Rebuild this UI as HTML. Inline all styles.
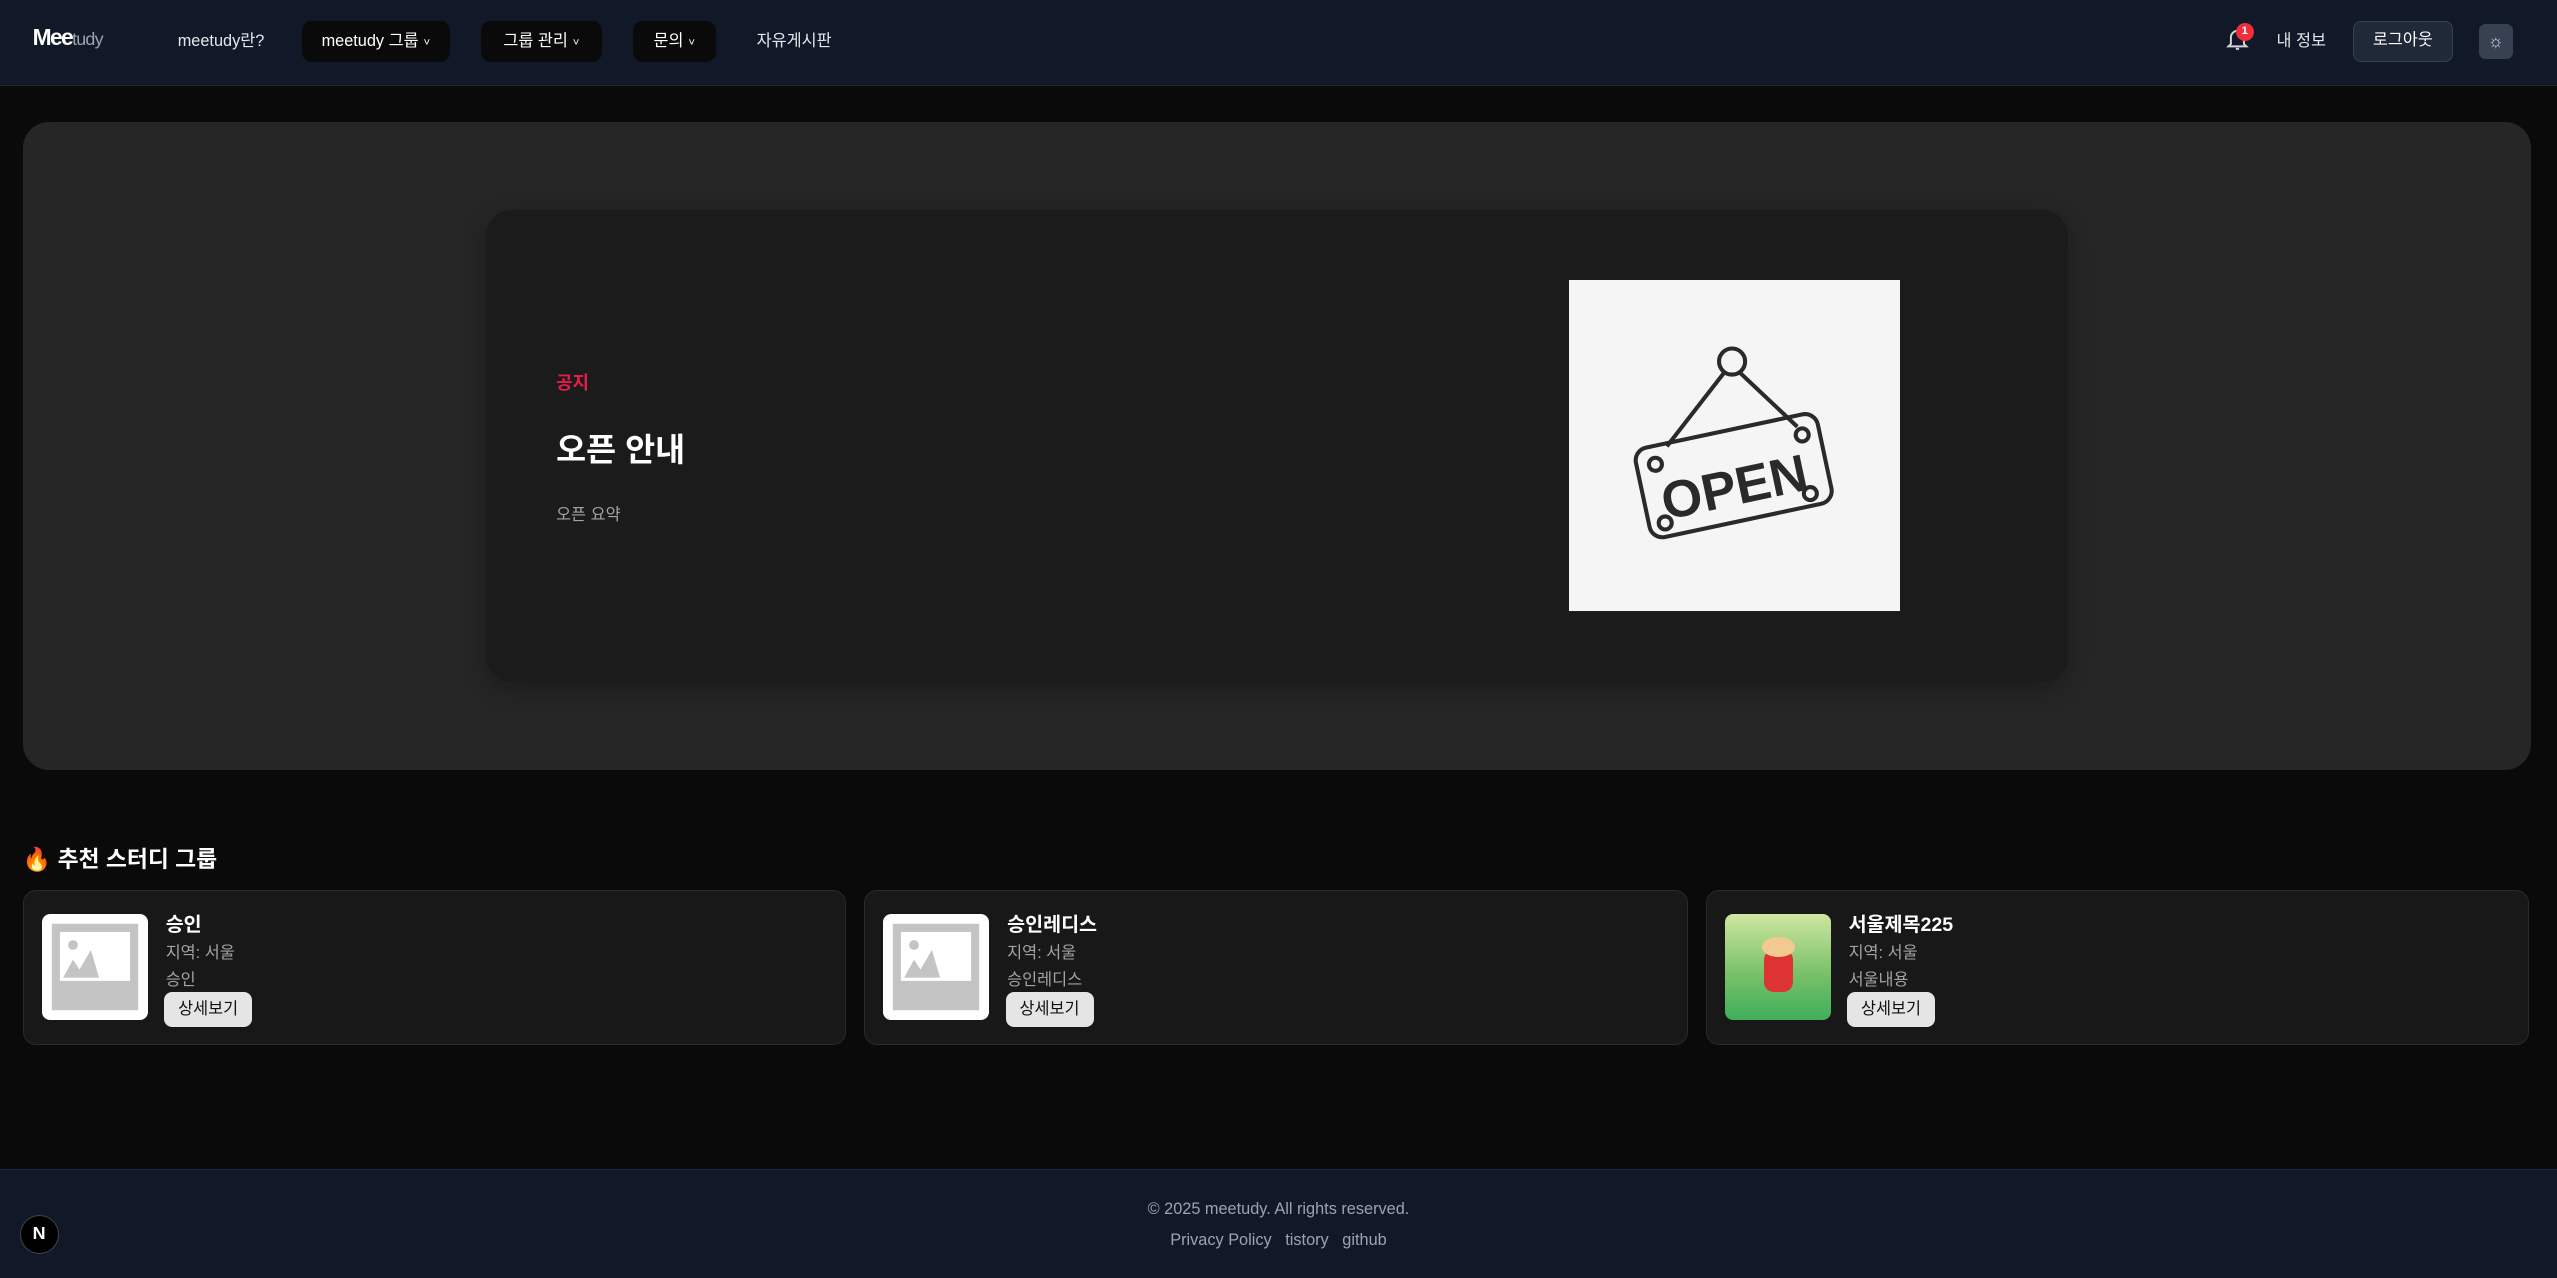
<!DOCTYPE html>
<html><head><meta charset="utf-8"><style>
*{margin:0;padding:0;box-sizing:border-box}
html,body{width:2557px;height:1278px;overflow:hidden;background:#0a0a0a}
#r{zoom:1.6307;width:1568px;height:784px;position:relative;font-family:"Liberation Sans","Noto Sans CJK KR",sans-serif;color:#fff}
.a{position:absolute;white-space:nowrap}
header{position:absolute;left:0;top:0;width:1568px;height:53px;background:#111827;border-bottom:1px solid #1f2937}
.nav{position:absolute;top:13px;height:25px;line-height:25px;font-size:10px;color:#e5e7eb;border-radius:6px;padding:0 10px;white-space:nowrap;text-align:center}
.dd{background:#0a0a0a;color:#fff}
.ch{font-size:7px;margin-left:3px}
.card{position:absolute;top:546px;width:505px;height:95px;background:#181818;border:1px solid #2b2b2b;border-radius:8px}
.thumb{position:absolute;left:11px;top:14px;width:65px;height:65px;background:#fff;border-radius:5px;overflow:hidden}
.ct{position:absolute;left:87px;top:10px;font-size:12px;font-weight:bold}
.c1{position:absolute;left:87px;top:29px;font-size:10px;color:#a3a3a3}
.c2{position:absolute;left:87px;top:46px;font-size:10px;color:#a3a3a3}
.btn{position:absolute;left:86px;top:62px;width:54px;height:21px;background:#e5e5e5;color:#111;border-radius:5px;font-size:10px;text-align:center;line-height:21px}
</style></head><body><div id="r">
<header>
<div class="a" style="left:20px;top:15px;font-size:14px;font-weight:bold;letter-spacing:-1px">Mee<span style="font-weight:normal;font-size:11px;color:#9ca3af;letter-spacing:-0.5px">tudy</span></div>
<div class="nav" style="left:99px">meetudy란?</div>
<div class="nav dd" style="left:185px;width:91px;padding:0">meetudy 그룹<span class="ch">˅</span></div>
<div class="nav dd" style="left:295px;width:74px;padding:0">그룹 관리<span class="ch">˅</span></div>
<div class="nav dd" style="left:388px;width:51px;padding:0">문의<span class="ch">˅</span></div>
<div class="nav" style="left:454px">자유게시판</div>
<svg class="a" style="left:1365px;top:16px" width="14" height="16" viewBox="0 0 14 16" fill="none" stroke="#d1d5db" stroke-width="1.2"><path d="M3 11V7a4 4 0 018 0v4l1.5 1.5h-11z"/><path d="M6 14h2"/></svg>
<div class="a" style="left:1371px;top:14px;width:11px;height:11px;border-radius:50%;background:#ef2f3a;font-size:7px;font-weight:bold;text-align:center;line-height:11px">1</div>
<div class="nav" style="left:1386px">내 정보</div>
<div class="a" style="left:1443px;top:13px;width:61px;height:25px;border:1px solid #374151;background:#1f2937;border-radius:5px;font-size:10px;text-align:center;line-height:23px">로그아웃</div>
<div class="a" style="left:1520px;top:15px;width:21px;height:21px;background:#374151;border-radius:4px;color:#d1d5db;font-size:11px;text-align:center;line-height:21px">☼</div>
</header>
<div class="a" style="left:14px;top:75px;width:1538px;height:397px;background:#262626;border-radius:16px"></div>
<div class="a" style="left:298px;top:129px;width:970px;height:289px;background:#1b1b1c;border-radius:16px;box-shadow:0 4px 16px rgba(0,0,0,.3)"></div>
<div class="a" style="left:341px;top:226px;font-size:11px;font-weight:bold;color:#e11d48">공지</div>
<div class="a" style="left:341px;top:260px;font-size:20px;font-weight:bold">오픈 안내</div>
<div class="a" style="left:341px;top:307px;font-size:10px;color:#a3a3a3">오픈 요약</div>
<svg class="a" style="left:962px;top:172px" width="203" height="203" viewBox="0 0 203 203">
<rect width="203" height="203" fill="#f5f5f5"/>
<g fill="none" stroke="#2a2a2a" stroke-width="2.5">
<circle cx="100" cy="50" r="8"/><path d="M95 57L60 102M105 57L140 90"/>
<rect x="44" y="92" width="114" height="56" rx="8" transform="rotate(-12 101 120)"/>
<circle cx="53" cy="113" r="4"/><circle cx="148" cy="131" r="4"/><circle cx="59" cy="149" r="4"/><circle cx="143" cy="95" r="4"/>
</g>
<text x="101" y="138" text-anchor="middle" font-family="Liberation Sans" font-weight="bold" font-size="32" fill="#2a2a2a" transform="rotate(-12 101 125)">OPEN</text>
</svg>
<div class="a" style="left:14px;top:516px;font-size:14px;font-weight:bold">🔥 추천 스터디 그룹</div>
<div class="card" style="left:14px"><div class="thumb"><svg width="65" height="65"><rect x="6" y="6" width="53" height="53" fill="#c4c4c4"/><rect x="11" y="11" width="43" height="30" fill="#fff"/><circle cx="19" cy="19" r="3" fill="#c4c4c4"/><path d="M13 39L19 28L23 34L30 22L35 39z" fill="#c4c4c4"/></svg></div><div class="ct">승인</div><div class="c1">지역: 서울</div><div class="c2">승인</div><div class="btn">상세보기</div></div>
<div class="card" style="left:530px"><div class="thumb"><svg width="65" height="65"><rect x="6" y="6" width="53" height="53" fill="#c4c4c4"/><rect x="11" y="11" width="43" height="30" fill="#fff"/><circle cx="19" cy="19" r="3" fill="#c4c4c4"/><path d="M13 39L19 28L23 34L30 22L35 39z" fill="#c4c4c4"/></svg></div><div class="ct">승인레디스</div><div class="c1">지역: 서울</div><div class="c2">승인레디스</div><div class="btn">상세보기</div></div>
<div class="card" style="left:1046px"><div class="thumb" style="background:linear-gradient(#cfe6a0,#7bc26a 55%,#3fae5a)"><div class="a" style="left:24px;top:22px;width:18px;height:26px;background:#d33;border-radius:6px"></div><div class="a" style="left:23px;top:14px;width:20px;height:12px;background:#f2c98f;border-radius:50%"></div></div><div class="ct">서울제목225</div><div class="c1">지역: 서울</div><div class="c2">서울내용</div><div class="btn">상세보기</div></div>
<div class="a" style="left:0;top:717px;width:1568px;height:67px;background:#111827;border-top:1px solid #1f2937"></div>
<div class="a" style="left:0;top:736px;width:1568px;text-align:center;font-size:10px;color:#9ca3af">© 2025 meetudy. All rights reserved.</div>
<div class="a" style="left:0;top:755px;width:1568px;text-align:center;font-size:10px;color:#9ca3af">Privacy Policy &nbsp; tistory &nbsp; github</div>
<div class="a" style="left:12px;top:745px;width:24px;height:24px;border-radius:50%;background:#000;border:1px solid #444;font-size:11px;font-weight:bold;text-align:center;line-height:22px">N</div>
</div></body></html>
